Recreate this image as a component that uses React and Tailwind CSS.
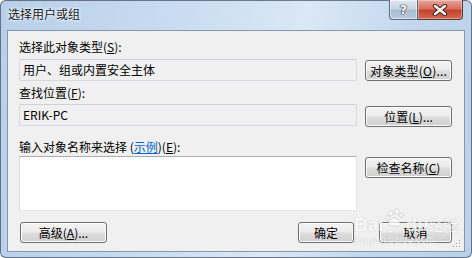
import React from "react";

const font = "font-['Noto_Sans_CJK_SC','Noto_Sans',sans-serif]";

const Btn = ({ children, className = "" }) => (
  <div
    className={`h-[21px] flex items-center justify-center rounded-[3px] border border-[#707070] bg-[linear-gradient(to_bottom,#f3f3f3_0%,#ebebeb_48%,#dddddd_52%,#cfcfcf_100%)] shadow-[inset_0_0_0_1px_#fbfbfb] text-[12px] leading-[14px] text-black ${className}`}
  >
    {children}
  </div>
);

const Label = ({ children, className = "" }) => (
  <div className={`text-[12px] leading-[14px] text-black ${className}`}>{children}</div>
);

const ReadOnlyBox = ({ children }) => (
  <div className="flex-1 h-[22px] flex items-center pl-[3px] rounded-[2px] border border-[#d6dadf] border-t-[#cdd1d6] bg-[#f0f0f0] text-[12px] leading-[14px] text-black">
    {children}
  </div>
);

export default function App() {
  return (
    <div
      className={`${font} relative w-[472px] h-[258px] flex flex-col overflow-hidden rounded-[6px] bg-[linear-gradient(100deg,#b7cfe9_0%,#c9dcf0_35%,#dbe8f5_60%,#c3d8ee_80%,#b9d0ea_100%)] shadow-[inset_0_0_0_1px_rgba(40,50,70,0.6)]`}
    >
      {/* title bar */}
      <div className="h-[30px] flex items-start justify-between">
        <div className="pl-[8px] pt-[7px] text-[12px] leading-[14px] text-[#1a1a1a] [text-shadow:0_0_5px_#fff,0_0_3px_#fff]">
          选择用户或组
        </div>
        <div className="flex mr-[9px]">
          <div className="w-[29px] h-[20px] flex items-center justify-center rounded-bl-[4px] border border-t-0 border-[#5b6b7e] bg-[linear-gradient(to_bottom,#dfe8f2_0%,#c7d5e4_45%,#a9bcd1_55%,#b9cadc_100%)] shadow-[inset_0_0_0_1px_rgba(255,255,255,0.5)]">
            <span className="font-['DejaVu_Sans',sans-serif] font-bold text-[13px] leading-[13px] text-white [text-shadow:0_0_1px_#222,0_0_1px_#222,0_0_1px_#222]">
              ?
            </span>
          </div>
          <div className="w-[45px] h-[20px] flex items-center justify-center rounded-br-[4px] border border-t-0 border-l-0 border-[#5b3a36] bg-[linear-gradient(to_bottom,#e8a69c_0%,#d7705f_45%,#c4412d_55%,#d36a4f_100%)] shadow-[inset_0_0_0_1px_rgba(255,255,255,0.35)]">
            <svg width="16" height="12" viewBox="0 0 16 12">
              <path d="M3 2 L13 10 M13 2 L3 10" stroke="#3a1f1c" strokeWidth="4.4" strokeLinecap="round" />
              <path d="M3 2 L13 10 M13 2 L3 10" stroke="#ffffff" strokeWidth="2.4" strokeLinecap="round" />
            </svg>
          </div>
        </div>
      </div>

      {/* client area */}
      <div className="relative mx-[7px] h-[222px] border border-[#8497ad] bg-[#f0f0f0] pl-[11px] pr-[12px] flex flex-col">
        <Label className="mt-[9px]">
          选择此对象类型(<u>S</u>):
        </Label>
        <div className="mt-[5px] flex items-start gap-[8px]">
          <ReadOnlyBox>用户、组或内置安全主体</ReadOnlyBox>
          <Btn className="w-[87px] mt-[1px] tracking-[0.2px]">
            对象类型(<u>O</u>)...
          </Btn>
        </div>

        <Label className="mt-[5px]">
          查找位置(<u>F</u>):
        </Label>
        <div className="mt-[4px] flex items-start gap-[8px]">
          <ReadOnlyBox>ERIK-PC</ReadOnlyBox>
          <Btn className="w-[87px] mt-[2px] h-[20px]">
            位置(<u>L</u>)...
          </Btn>
        </div>

        <Label className="mt-[13px]">
          输入对象名称来选择 (<span className="text-[#0066cc] underline">示例</span>)(<u>E</u>):
        </Label>
        <div className="mt-[2px] flex items-start gap-[8px]">
          <div className="flex-1 h-[55px] bg-white border border-[#e2e3ea] border-t-[#abadb3] border-l-[#dbdfe6]" />
          <Btn className="w-[87px] mt-[1px]">
            检查名称(<u>C</u>)
          </Btn>
        </div>

        <div className="mt-[11px] flex items-start">
          <Btn className="w-[87px] ml-[1px]">
            高级(<u>A</u>)...
          </Btn>
          <div className="flex-1" />
          <Btn className="w-[56px]">确定</Btn>
          <Btn className="w-[73px] ml-[25px]">取消</Btn>
        </div>

        {/* size grip */}
        <svg className="absolute right-[2px] bottom-[2px]" width="10" height="10" viewBox="0 0 10 10">
          {[
            [8, 2],
            [5, 5],
            [8, 5],
            [2, 8],
            [5, 8],
            [8, 8],
          ].map(([x, y], i) => (
            <g key={i}>
              <rect x={x} y={y} width="1" height="1" fill="#fff" />
              <rect x={x - 1} y={y - 1} width="1" height="1" fill="#a0a0a0" />
            </g>
          ))}
        </svg>
      </div>

      {/* watermark */}
      <div className="absolute left-[354px] top-[206px] pointer-events-none select-none opacity-70">
        <div className="flex items-end h-[28px]">
          <span className="font-['Liberation_Sans',sans-serif] font-bold text-[19px] leading-[18px] text-white [text-shadow:0_0_1px_rgba(110,110,110,0.7)]">
            Bai
          </span>
          <svg className="mb-[6px]" width="22" height="20" viewBox="0 0 36 34">
            <g fill="#ffffff" stroke="rgba(130,130,130,0.6)" strokeWidth="1">
              <ellipse cx="11" cy="9" rx="3.5" ry="4.5" />
              <ellipse cx="21" cy="6" rx="3.5" ry="4.5" />
              <ellipse cx="29" cy="12" rx="3" ry="4" />
              <ellipse cx="5" cy="17" rx="3" ry="4" />
              <path d="M10 30 C4 30 6 22 12 19 C16 16 19 16 23 20 C28 24 29 31 22 31 C18 31 15 29 10 30 Z" />
            </g>
          </svg>
          <span className="font-['Liberation_Sans',sans-serif] font-bold text-[19px] leading-[18px] text-white [text-shadow:0_0_1px_rgba(110,110,110,0.7)]">
            du
          </span>
          <span className="text-[15px] leading-[18px] text-white [text-shadow:0_0_1px_rgba(110,110,110,0.7)]">
            经验
          </span>
        </div>
        <div className="font-['Liberation_Sans',sans-serif] text-[10px] leading-[10px] mt-[1px] text-white [text-shadow:0_0_1px_rgba(110,110,110,0.6)]">
          jingyan.baidu.com
        </div>
      </div>
    </div>
  );
}
